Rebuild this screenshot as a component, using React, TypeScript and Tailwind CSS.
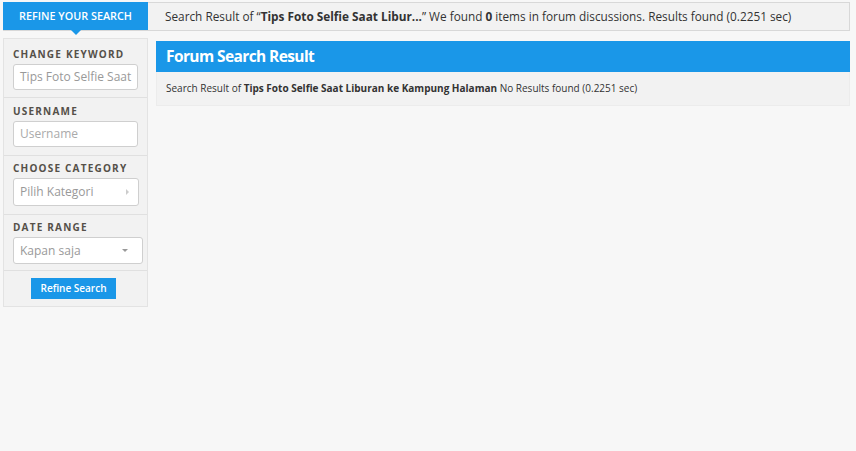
const font = { fontFamily: '"Open Sans", "Noto Sans", sans-serif' };

const Label = ({ children }: { children: string }) => (
  <div className="text-[10px] leading-[12px] font-bold tracking-[1.2px] text-[#555049] mb-[4px]">
    {children}
  </div>
);

const App = () => {
  return (
    <div className="min-h-[451px] w-[856px] bg-[#f7f7f7] text-[#333]" style={font}>
      {/* Top bar */}
      <div className="pt-[2px] pl-[3px] pr-[6px]">
        <div className="flex h-[29px] border border-[#d8d8d8] bg-[#f2f2f2]">
          <div className="relative -mt-px -ml-px w-[145px] h-[28px] bg-[#1a97e8] flex items-center justify-center text-white text-[10.8px] font-semibold">
            REFINE YOUR SEARCH
            <div className="absolute left-[68px] -bottom-[5px] w-0 h-0 border-l-[5px] border-r-[5px] border-t-[5px] border-l-transparent border-r-transparent border-t-[#1a97e8]" />
          </div>
          <div className="flex items-center pl-[17px] text-[11.8px] text-[#333]">
            Search Result of “<b className="font-bold">Tips Foto Selfie Saat Libur...</b>” We found&nbsp;
            <b className="font-bold">0</b>&nbsp;items in forum discussions. Results found (0.2251 sec)
          </div>
        </div>
      </div>

      <div className="flex items-start gap-[8px] pl-[3px] pr-[6px] mt-[7px]">
        {/* Sidebar */}
        <div className="w-[145px] shrink-0 bg-[#f2f2f2] border border-[#e3e3e3]">
          <div className="pl-[9px] pt-[9px] pb-[7px] border-b border-[#e0e0e0]">
            <Label>CHANGE KEYWORD</Label>
            <div className="w-[125px] h-[26px] bg-white border border-[#cfcfcf] rounded-[3px] flex items-center px-[6px] text-[12px] text-[#999] whitespace-nowrap overflow-hidden">
              Tips Foto Selfie Saat
            </div>
          </div>
          <div className="pl-[9px] pt-[7px] pb-[8px] border-b border-[#e0e0e0]">
            <Label>USERNAME</Label>
            <div className="w-[125px] h-[26px] bg-white border border-[#cfcfcf] rounded-[3px] flex items-center px-[6px] text-[12px] text-[#aaa]">
              Username
            </div>
          </div>
          <div className="pl-[9px] pt-[6px] pb-[8px] border-b border-[#e0e0e0]">
            <Label>CHOOSE CATEGORY</Label>
            <div className="w-[126px] h-[28px] bg-white border border-[#cfcfcf] rounded-[3px] flex items-center justify-between px-[6px] text-[12px] text-[#999]">
              Pilih Kategori
              <span className="w-0 h-0 border-t-[3px] border-b-[3px] border-l-[3px] border-t-transparent border-b-transparent border-l-[#ccc] mr-[3px]" />
            </div>
          </div>
          <div className="pl-[9px] pt-[6px] pb-[6px] border-b border-[#e0e0e0]">
            <Label>DATE RANGE</Label>
            <div className="w-[130px] h-[27px] bg-white border border-[#cfcfcf] rounded-[3px] flex items-center justify-between px-[6px] text-[12px] text-[#999]">
              Kapan saja
              <span className="w-0 h-0 border-l-[3px] border-r-[3px] border-t-[3px] border-l-transparent border-r-transparent border-t-[#999] mr-[8px]" />
            </div>
          </div>
          <div className="flex justify-center pt-[7px] pb-[7px] pr-[4px]">
            <button className="w-[85px] h-[21px] bg-[#1a97e8] text-white text-[10px] font-semibold">
              Refine Search
            </button>
          </div>
        </div>

        {/* Main */}
        <div className="flex-1 mt-[3px] border border-[#ececec] bg-[#f2f2f2]">
          <div className="h-[31px] -m-px mb-0 bg-[#1a97e8] flex items-center pl-[10px] text-white text-[15.5px] font-bold tracking-[-0.6px]">
            Forum Search Result
          </div>
          <div className="h-[33px] flex items-center pl-[9px] text-[10px] text-[#333]">
            Search Result of&nbsp;<b className="font-bold">Tips Foto Selfie Saat Liburan ke Kampung Halaman</b>&nbsp;No Results found (0.2251 sec)
          </div>
        </div>
      </div>
    </div>
  );
};

export default App;
